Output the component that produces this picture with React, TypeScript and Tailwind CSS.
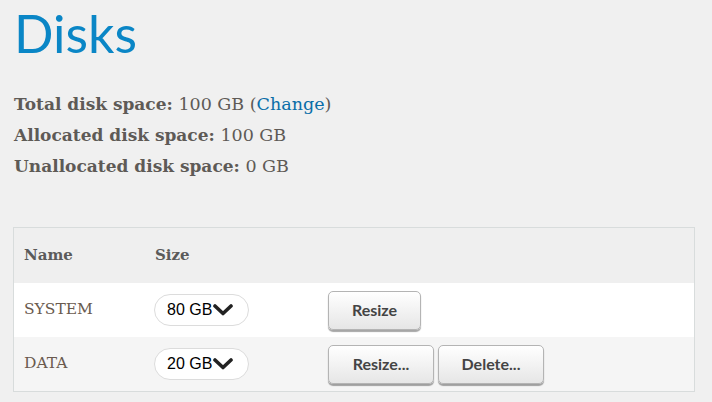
import React from 'react';

const slab = { fontFamily: '"DejaVu Serif", "Liberation Serif", serif' };

function SizeSelect({ value }: { value: string }) {
  return (
    <div className="flex h-[32px] w-[95px] items-center rounded-full border border-[#dcdcdc] bg-white pl-[12px] text-[16px] text-black" style={{ fontFamily: '"Liberation Sans", Arial, sans-serif' }}>
      <span>{value}</span>
      <svg width="20" height="12" viewBox="0 0 20 12" className="ml-[1px]">
        <path d="M2 2 L10 9.5 L18 2" fill="none" stroke="#222" strokeWidth="3.6" strokeLinecap="round" strokeLinejoin="round" />
      </svg>
    </div>
  );
}

function Btn({ label, w }: { label: string; w: string }) {
  return (
    <button
      className={`h-[39px] ${w} rounded-[5px] border border-[#b4b4b4] bg-gradient-to-b from-white to-[#e6e6e6] text-[16px] font-bold text-[#444] shadow-[0_2px_1px_rgba(0,0,0,0.35)]`}
      style={{ fontFamily: 'Lato, "Open Sans", sans-serif' }}
    >
      {label}
    </button>
  );
}

export default function App() {
  return (
    <div className="h-[402px] w-[712px] overflow-hidden bg-[#f0f0f0] pl-[13px] pt-[3px]">
      <h1 className="text-[52px] leading-[60px] text-[#0a86c6] pl-[1px]" style={{ fontFamily: 'Lato, "Open Sans", sans-serif' }}>
        Disks
      </h1>

      {/* Disk space summary */}
      <div className="mt-[26px] pl-[1px] text-[17.5px] leading-[31px] text-[#5e5a56]" style={slab}>
        <div>
          <span className="text-[17px] font-bold">Total disk space:</span> 100 GB (<a className="text-[#0a6ea8]">Change</a>)
        </div>
        <div>
          <span className="text-[17px] font-bold">Allocated disk space:</span> 100 GB
        </div>
        <div>
          <span className="text-[17px] font-bold">Unallocated disk space:</span> 0 GB
        </div>
      </div>

      {/* Disks table */}
      <div className="mt-[45px] w-[682px] border border-[#d8dcdc]">
        <div className="flex h-[55px] items-center bg-[#efefef] text-[15px] font-bold text-[#5a5a5a]" style={slab}>
          <div className="w-[141px] pl-[10px]">Name</div>
          <div>Size</div>
        </div>
        <div className="flex h-[54px] items-center bg-white text-[15.5px] text-[#6a5a4e]" style={slab}>
          <div className="w-[140px] pl-[10px]">SYSTEM</div>
          <div className="w-[174px]">
            <SizeSelect value="80 GB" />
          </div>
          <Btn label="Resize" w="w-[93px]" />
        </div>
        <div className="flex h-[54px] items-center bg-[#f5f5f5] text-[15.5px] text-[#6a5a4e]" style={slab}>
          <div className="w-[140px] pl-[10px]">DATA</div>
          <div className="w-[174px]">
            <SizeSelect value="20 GB" />
          </div>
          <div className="flex gap-[4px]">
            <Btn label="Resize..." w="w-[106px]" />
            <Btn label="Delete..." w="w-[106px]" />
          </div>
        </div>
      </div>
    </div>
  );
}
